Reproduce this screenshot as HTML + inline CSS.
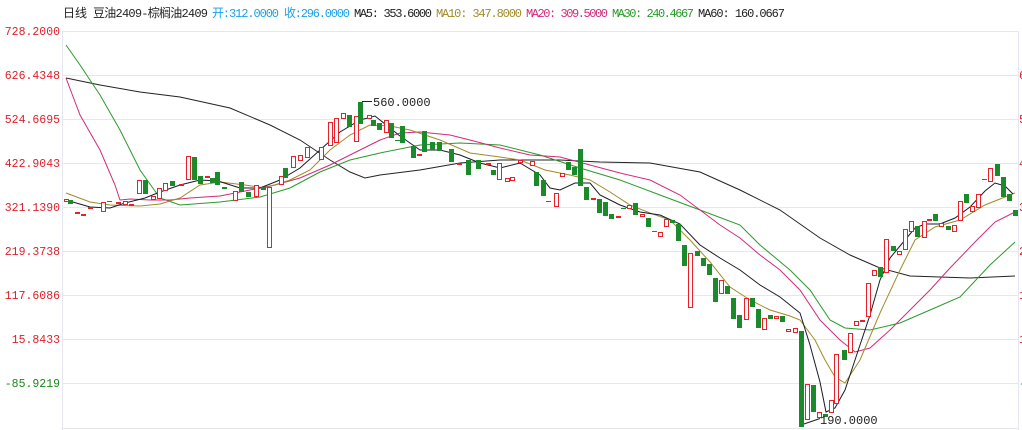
<!DOCTYPE html>
<html><head><meta charset="utf-8"><style>
html,body{margin:0;padding:0;background:#fff;width:1022px;height:430px;overflow:hidden}
svg{display:block}
text{font-family:"Liberation Mono","WenQuanYi Zen Hei",monospace;font-size:12px}
.ax{font-size:11.5px;fill:#e0202a}
.g{fill:#1a8a2a}
.r{fill:#fff;stroke:#e8202a;stroke-width:1}
</style></head><body>
<svg width="1022" height="430" viewBox="0 0 1022 430" xmlns="http://www.w3.org/2000/svg">
<g stroke="#e6e6f0" stroke-width="1" shape-rendering="crispEdges">
<line x1="62" y1="31.5" x2="1018" y2="31.5"/><line x1="62" y1="75.5" x2="1018" y2="75.5"/>
<line x1="62" y1="119.5" x2="1018" y2="119.5"/><line x1="62" y1="163.5" x2="1018" y2="163.5"/>
<line x1="62" y1="207.5" x2="1018" y2="207.5"/><line x1="62" y1="251.5" x2="1018" y2="251.5"/>
<line x1="62" y1="295.5" x2="1018" y2="295.5"/><line x1="62" y1="339.5" x2="1018" y2="339.5"/>
<line x1="62" y1="383.5" x2="1018" y2="383.5"/><line x1="62" y1="428.5" x2="1018" y2="428.5"/>
<line x1="62.5" y1="31" x2="62.5" y2="430"/><line x1="1018.5" y1="31" x2="1018.5" y2="430"/>
</g>
<g text-anchor="end">
<text class="ax" x="60" y="35">728.2000</text>
<text class="ax" x="60" y="79">626.4348</text>
<text class="ax" x="60" y="123">524.6695</text>
<text class="ax" x="60" y="167">422.9043</text>
<text class="ax" x="60" y="211">321.1390</text>
<text class="ax" x="60" y="255">219.3738</text>
<text class="ax" x="60" y="299">117.6086</text>
<text class="ax" x="60" y="343">15.8433</text>
<text class="ax" x="60" y="387" style="fill:#1a8a1a">-85.9219</text>
</g>
<g>
<text class="ax" x="1019" y="79">6</text><text class="ax" x="1019" y="123">5</text><text class="ax" x="1019" y="167">4</text><text class="ax" x="1019" y="211">3</text><text class="ax" x="1019" y="255">2</text><text class="ax" x="1019" y="299">1</text><text class="ax" x="1019" y="343">1</text><text class="ax" x="1019" y="387" style="fill:#1a8a1a">-</text>
</g>
<text x="63" y="17" fill="#222">日线</text>
<text x="93" y="17" fill="#222" textLength="115">豆油2409-棕榈油2409</text>
<text x="212" y="17" fill="#1aa0e8" textLength="67">开:312.0000</text>
<text x="284" y="17" fill="#1aa0e8" textLength="66">收:296.0000</text>
<text x="354" y="17" fill="#222" textLength="78">MA5: 353.6000</text>
<text x="436" y="17" fill="#a08a2a" textLength="86">MA10: 347.8000</text>
<text x="526" y="17" fill="#d42a7a" textLength="82">MA20: 309.5000</text>
<text x="612" y="17" fill="#2a9a2a" textLength="82">MA30: 240.4667</text>
<text x="698" y="17" fill="#222" textLength="87">MA60: 160.0667</text>

<g fill="none" stroke-width="1">
<polyline stroke="#222" points="66,78 100,85 140,92 180,97 230,108 270,125 300,140 330,160 350,172 365,178 380,175 420,170 460,163 500,160 560,160 600,162 650,163 700,172 740,190 780,210 820,238 850,255 880,268 910,276 940,277 970,278 1015,276"/>
<polyline stroke="#2a9a2a" points="66,45 80,65 100,95 120,130 140,170 160,198 180,205 220,202 260,197 290,188 320,172 350,160 380,153 420,145 460,143 500,145 540,155 580,168 620,180 660,195 700,210 740,225 760,245 790,270 810,290 830,320 845,328 870,330 900,323 930,310 960,297 990,265 1015,242"/>
<polyline stroke="#d42a7a" points="66,78 80,115 100,150 115,185 120,200 130,199 150,200 170,200 190,198 220,196 250,190 275,185 300,178 330,165 360,150 380,140 400,133 420,132 450,135 470,140 500,148 530,155 560,157 590,165 620,173 650,180 680,195 700,210 720,225 740,238 760,255 780,270 800,290 820,320 840,340 855,352 870,348 890,330 910,310 930,290 950,268 975,242 995,222 1015,212"/>
<polyline stroke="#a08a2a" points="66,193 90,202 110,205 140,206 160,204 180,198 200,185 220,182 245,185 265,188 290,180 310,170 330,150 350,135 370,125 390,126 410,130 440,140 470,153 500,157 520,160 545,170 570,175 590,180 610,192 630,205 650,213 670,220 690,240 710,262 730,287 750,300 770,310 790,316 800,320 815,340 825,360 835,377 845,383 860,360 880,313 900,270 915,240 935,227 960,220 985,205 1015,193"/>
<polyline stroke="#1a1a2a" points="66,200 90,207 110,208 125,203 145,198 160,192 180,185 200,180 218,181 240,188 260,188 280,180 300,168 320,150 340,132 360,120 375,116 390,128 400,136 420,150 440,150 460,155 480,163 500,168 520,163 540,175 550,188 560,190 575,183 590,183 600,195 620,205 640,212 660,215 680,224 700,245 720,258 740,270 760,285 780,297 800,313 810,345 820,382 826,412 835,408 845,390 855,360 870,315 880,280 890,258 905,240 915,228 925,224 940,224 955,218 970,207 985,191 995,183 1005,186 1013,194"/>
</g>
<g shape-rendering="crispEdges">
<rect class="r" x="64.5" y="199.5" width="4" height="2"/>
<rect class="g" x="68" y="200" width="5" height="4"/>
<rect class="r" x="75.5" y="212.5" width="4" height="1"/>
<rect class="r" x="81.5" y="214.5" width="4" height="1"/>
<rect class="r" x="88.5" y="207.5" width="4" height="1"/>
<rect class="r" x="101.5" y="202.5" width="4" height="9"/>
<rect class="g" x="107" y="201" width="5" height="1"/>
<rect class="r" x="116.5" y="202.5" width="4" height="1"/>
<rect class="r" x="123.5" y="201.5" width="4" height="3"/>
<rect class="r" x="129.5" y="204.5" width="4" height="1"/>
<rect class="r" x="137.5" y="180.5" width="4" height="13"/>
<rect class="g" x="143" y="180" width="5" height="14"/>
<rect class="r" x="151.5" y="196.5" width="4" height="3"/>
<rect class="r" x="157.5" y="188.5" width="4" height="10"/>
<rect class="r" x="163.5" y="183.5" width="4" height="7"/>
<rect class="g" x="170" y="181" width="5" height="5"/>
<rect class="r" x="179.5" y="184.5" width="4" height="1"/>
<rect class="r" x="186.5" y="156.5" width="4" height="23"/>
<rect class="g" x="192" y="157" width="5" height="23"/>
<rect class="g" x="198" y="176" width="5" height="8"/>
<rect class="r" x="205.5" y="176.5" width="4" height="1"/>
<rect class="g" x="210" y="178" width="5" height="5"/>
<rect class="g" x="215" y="172" width="5" height="13"/>
<rect class="g" x="222" y="187" width="5" height="2"/>
<rect class="r" x="233.5" y="191.5" width="4" height="9"/>
<rect class="g" x="239" y="182" width="5" height="10"/>
<rect class="g" x="246" y="192" width="5" height="5"/>
<rect class="r" x="254.5" y="185.5" width="4" height="11"/>
<rect class="g" x="261" y="187" width="5" height="3"/>
<rect class="r" x="267.5" y="187.5" width="4" height="60"/>
<rect class="r" x="279.5" y="176.5" width="4" height="8"/>
<rect class="g" x="283" y="168" width="5" height="10"/>
<rect class="r" x="291.5" y="156.5" width="4" height="11"/>
<rect class="r" x="298.5" y="155.5" width="4" height="5"/>
<rect class="r" x="305.5" y="147.5" width="4" height="10"/>
<rect class="r" x="319.5" y="147.5" width="4" height="12"/>
<rect class="r" x="328.5" y="122.5" width="4" height="23"/>
<rect class="r" x="334.5" y="118.5" width="4" height="24"/>
<rect class="r" x="341.5" y="113.5" width="4" height="5"/>
<rect class="g" x="347" y="115" width="5" height="12"/>
<rect class="r" x="354.5" y="116.5" width="4" height="25"/>
<rect class="g" x="358" y="102" width="5" height="22"/>
<rect class="r" x="367.5" y="115.5" width="4" height="3"/>
<rect class="g" x="371" y="120" width="5" height="6"/>
<rect class="g" x="377" y="123" width="5" height="7"/>
<rect class="r" x="384.5" y="120.5" width="4" height="12"/>
<rect class="g" x="389" y="123" width="5" height="15"/>
<rect class="g" x="395" y="140" width="5" height="1"/>
<rect class="g" x="400" y="126" width="5" height="17"/>
<rect class="g" x="411" y="146" width="5" height="12"/>
<rect class="r" x="417.5" y="154.5" width="4" height="1"/>
<rect class="g" x="422" y="131" width="5" height="21"/>
<rect class="g" x="430" y="142" width="5" height="8"/>
<rect class="g" x="437" y="142" width="5" height="9"/>
<rect class="g" x="449" y="149" width="5" height="13"/>
<rect class="r" x="457.5" y="163.5" width="4" height="1"/>
<rect class="g" x="466" y="160" width="5" height="15"/>
<rect class="g" x="476" y="160" width="5" height="9"/>
<rect class="r" x="486.5" y="163.5" width="4" height="1"/>
<rect class="g" x="491" y="170" width="5" height="5"/>
<rect class="r" x="497.5" y="163.5" width="4" height="16"/>
<rect class="r" x="505.5" y="178.5" width="4" height="3"/>
<rect class="r" x="510.5" y="177.5" width="4" height="3"/>
<rect class="r" x="518.5" y="160.5" width="4" height="2"/>
<rect class="r" x="530.5" y="161.5" width="4" height="4"/>
<rect class="g" x="534" y="172" width="5" height="14"/>
<rect class="g" x="541" y="180" width="5" height="16"/>
<rect class="g" x="546" y="201" width="5" height="1"/>
<rect class="r" x="554.5" y="193.5" width="4" height="13"/>
<rect class="r" x="560.5" y="173.5" width="4" height="3"/>
<rect class="g" x="566" y="162" width="5" height="8"/>
<rect class="g" x="572" y="167" width="5" height="8"/>
<rect class="g" x="578" y="149" width="5" height="37"/>
<rect class="g" x="584" y="187" width="5" height="13"/>
<rect class="r" x="591.5" y="198.5" width="4" height="1"/>
<rect class="g" x="597" y="199" width="5" height="14"/>
<rect class="g" x="603" y="202" width="5" height="14"/>
<rect class="g" x="609" y="214" width="5" height="5"/>
<rect class="r" x="616.5" y="216.5" width="4" height="1"/>
<rect class="g" x="621" y="208" width="5" height="1"/>
<rect class="r" x="627.5" y="205.5" width="4" height="3"/>
<rect class="g" x="633" y="203" width="5" height="12"/>
<rect class="r" x="640.5" y="214.5" width="4" height="2"/>
<rect class="g" x="646" y="218" width="5" height="9"/>
<rect class="g" x="652" y="231" width="5" height="1"/>
<rect class="r" x="658.5" y="232.5" width="4" height="4"/>
<rect class="r" x="664.5" y="219.5" width="4" height="7"/>
<rect class="g" x="670" y="220" width="5" height="3"/>
<rect class="g" x="676" y="224" width="5" height="17"/>
<rect class="g" x="682" y="245" width="5" height="21"/>
<rect class="r" x="688.5" y="253.5" width="4" height="54"/>
<rect class="g" x="695" y="251" width="5" height="5"/>
<rect class="g" x="701" y="258" width="5" height="8"/>
<rect class="g" x="707" y="264" width="5" height="11"/>
<rect class="g" x="713" y="278" width="5" height="24"/>
<rect class="r" x="719.5" y="280.5" width="4" height="13"/>
<rect class="g" x="725" y="286" width="5" height="8"/>
<rect class="g" x="731" y="298" width="5" height="21"/>
<rect class="g" x="737" y="315" width="5" height="13"/>
<rect class="r" x="744.5" y="298.5" width="4" height="21"/>
<rect class="g" x="750" y="298" width="5" height="9"/>
<rect class="g" x="756" y="309" width="5" height="19"/>
<rect class="r" x="762.5" y="318.5" width="4" height="11"/>
<rect class="g" x="768" y="315" width="5" height="4"/>
<rect class="r" x="774.5" y="316.5" width="4" height="2"/>
<rect class="g" x="780" y="316" width="5" height="6"/>
<rect class="r" x="786.5" y="329.5" width="4" height="2"/>
<rect class="r" x="793.5" y="328.5" width="4" height="4"/>
<rect class="g" x="799" y="331" width="5" height="96"/>
<rect class="r" x="805.5" y="384.5" width="4" height="35"/>
<rect class="g" x="811" y="385" width="5" height="27"/>
<rect class="r" x="817.5" y="412.5" width="4" height="5"/>
<rect class="g" x="823" y="414" width="5" height="3"/>
<rect class="r" x="829.5" y="400.5" width="4" height="12"/>
<rect class="r" x="834.5" y="354.5" width="4" height="49"/>
<rect class="g" x="842" y="350" width="5" height="10"/>
<rect class="r" x="848.5" y="333.5" width="4" height="19"/>
<rect class="r" x="854.5" y="321.5" width="4" height="4"/>
<rect class="r" x="860.5" y="320.5" width="4" height="1"/>
<rect class="r" x="866.5" y="283.5" width="4" height="33"/>
<rect class="r" x="872.5" y="270.5" width="4" height="5"/>
<rect class="g" x="878" y="267" width="5" height="10"/>
<rect class="r" x="884.5" y="239.5" width="4" height="33"/>
<rect class="g" x="891" y="246" width="5" height="5"/>
<rect class="r" x="897.5" y="251.5" width="4" height="3"/>
<rect class="r" x="903.5" y="229.5" width="4" height="20"/>
<rect class="r" x="909.5" y="221.5" width="4" height="10"/>
<rect class="g" x="915" y="226" width="5" height="11"/>
<rect class="r" x="922.5" y="221.5" width="4" height="16"/>
<rect class="r" x="927.5" y="219.5" width="4" height="1"/>
<rect class="g" x="933" y="214" width="5" height="7"/>
<rect class="r" x="939.5" y="223.5" width="4" height="3"/>
<rect class="g" x="946" y="226" width="5" height="4"/>
<rect class="r" x="952.5" y="225.5" width="4" height="6"/>
<rect class="r" x="958.5" y="201.5" width="4" height="19"/>
<rect class="g" x="964" y="194" width="5" height="9"/>
<rect class="r" x="970.5" y="206.5" width="4" height="5"/>
<rect class="r" x="976.5" y="194.5" width="4" height="13"/>
<rect class="g" x="982" y="179" width="5" height="1"/>
<rect class="r" x="988.5" y="168.5" width="4" height="13"/>
<rect class="g" x="995" y="164" width="5" height="12"/>
<rect class="g" x="1001" y="177" width="5" height="20"/>
<rect class="g" x="1007" y="194" width="5" height="7"/>
<rect class="g" x="1013" y="210" width="5" height="6"/>
</g>
<line x1="362" y1="101.5" x2="372" y2="101.5" stroke="#222"/>
<text x="373" y="106" fill="#222">560.0000</text>
<line x1="804" y1="424" x2="820" y2="418.5" stroke="#222"/>
<text x="820" y="424" fill="#222">190.0000</text>
</svg>
</body></html>
